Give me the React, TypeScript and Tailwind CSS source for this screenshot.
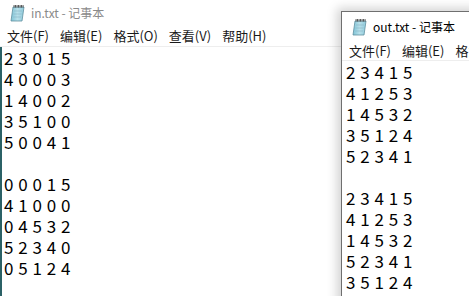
import React from 'react';

const cjk = { fontFamily: '"Noto Sans CJK SC", "Microsoft YaHei", sans-serif' };

function NotepadIcon() {
  return (
    <svg width="15" height="18" viewBox="0 0 15 18">
      <defs>
        <linearGradient id="pad" x1="0" y1="0" x2="1" y2="0">
          <stop offset="0" stopColor="#7fc3d6" />
          <stop offset="0.5" stopColor="#b7e0ea" />
          <stop offset="1" stopColor="#8fcbdc" />
        </linearGradient>
      </defs>
      <path d="M3 3 L14 3 L12 17 L1 17 Z" fill="url(#pad)" stroke="#5f8fa0" strokeWidth="0.8" />
      <path d="M4 7 L12 7 M3.6 10 L11.6 10 M3.2 13 L11.2 13" stroke="#8ab3c2" strokeWidth="0.6" />
      {[4, 5.5, 7, 8.5, 10, 11.5, 13].map((x) => (
        <rect key={x} x={x - 0.4} y="1" width="0.9" height="2.6" fill="#4a4a4a" />
      ))}
    </svg>
  );
}

function Menu({ items }: { items: string[] }) {
  return (
    <div className="flex pl-[1.5px] text-[13px] text-[#1a1a1a]" style={cjk}>
      {items.map((m) => (
        <span key={m} className="px-[5.5px] whitespace-nowrap">
          {m}
        </span>
      ))}
    </div>
  );
}

function Lines({ rows }: { rows: string[] }) {
  return (
    <div className="text-[17px] leading-[21px] [word-spacing:1px] text-black whitespace-pre" style={cjk}>
      {rows.map((r, i) => (
        <div key={i} className="h-[21px]">
          {r}
        </div>
      ))}
    </div>
  );
}

export default function App() {
  const menus = ['文件(F)', '编辑(E)', '格式(O)', '查看(V)', '帮助(H)'];
  return (
    <div className="relative w-[469px] h-[296px] overflow-hidden bg-white">
      {/* in.txt window (inactive) */}
      <div className="flex flex-col h-full">
        <div className="h-[26px] flex items-center gap-[6px] pl-[10px]">
          <NotepadIcon />
          <span className="text-[12px] text-[#8a8a8a]" style={cjk}>in.txt - 记事本</span>
        </div>
        <div className="h-[21px] flex items-center border-b border-[#eeeeee]">
          <Menu items={menus} />
        </div>
        <div className="flex-1 flex">
          <div className="w-[2px] bg-[#2b6166]" />
          <div className="pl-[2px]">
            <Lines
              rows={['2 3 0 1 5', '4 0 0 0 3', '1 4 0 0 2', '3 5 1 0 0', '5 0 0 4 1', '', '0 0 0 1 5', '4 1 0 0 0', '0 4 5 3 2', '5 2 3 4 0', '0 5 1 2 4']}
            />
          </div>
        </div>
      </div>

      {/* out.txt window (active), floating over the first */}
      <div className="absolute left-[341px] top-[11px] w-[200px] h-[320px] bg-white border-l border-t border-[#6f6f6f] shadow-[-4px_-3px_10px_rgba(0,0,0,0.18)] flex flex-col">
        <div className="h-[30px] flex items-center gap-[6px] pl-[10px]">
          <NotepadIcon />
          <span className="text-[12px] text-black" style={cjk}>out.txt - 记事本</span>
        </div>
        <div className="h-[19px] flex items-center border-b border-[#eeeeee]">
          <Menu items={menus} />
        </div>
        <div className="pl-[4px]">
          <Lines
            rows={['2 3 4 1 5', '4 1 2 5 3', '1 4 5 3 2', '3 5 1 2 4', '5 2 3 4 1', '', '2 3 4 1 5', '4 1 2 5 3', '1 4 5 3 2', '5 2 3 4 1', '3 5 1 2 4']}
          />
        </div>
      </div>
    </div>
  );
}
